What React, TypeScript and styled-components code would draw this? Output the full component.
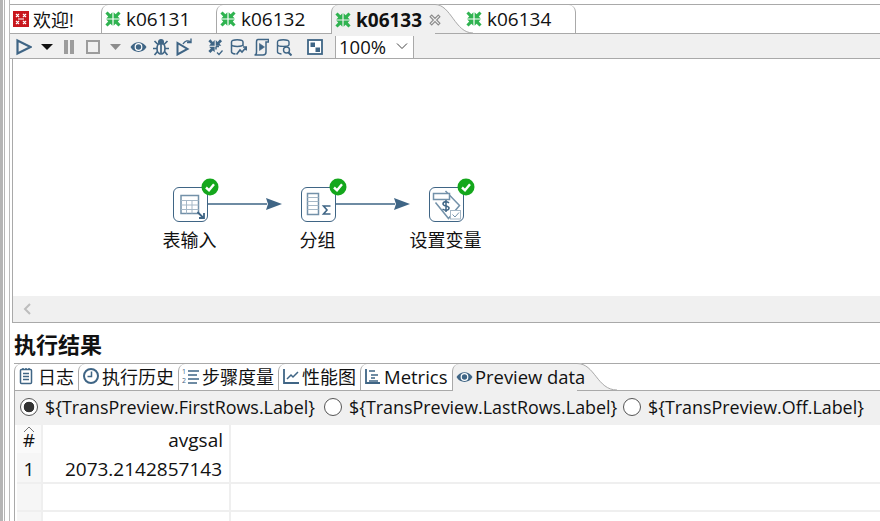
import * as React from "react";
import styled, { createGlobalStyle } from "styled-components";

const INK = "#3f6585";
const SOFT = "#7391a9";
const FAINT = "#a6b8c7";
const LINE = "#a9a9a9";
const PANEL = "#f0f0f0";
const CJK = `"Open Sans", "Noto Sans", "Noto Sans CJK SC", sans-serif`;

const Global = createGlobalStyle`
  html, body { margin: 0; padding: 0; background: #fff; }
  body { font-family: ${CJK}; color: #111; }
`;

const Page = styled.div`
  width: 880px;
  height: 521px;
  display: flex;
  overflow: hidden;
`;

const Gutter = styled.div`
  width: 10px;
  flex: none;
  background: linear-gradient(90deg, #b5b5b5 0 3px, #fff 3px 4px, #b5b5b5 4px 5px, #fff 5px 9px, #bbb 9px 10px);
`;

const Main = styled.div`
  flex: 1;
  min-width: 0;
  display: flex;
  flex-direction: column;
`;

const EditorTabs = styled.div`
  height: 30px;
  margin-top: 4px;
  display: flex;
  flex: none;
  border-top: 1px solid ${LINE};
  border-bottom: 1px solid ${LINE};
  box-sizing: border-box;
`;

const EditorTab = styled.div<{ $w: number; $active?: boolean }>`
  width: ${(p) => p.$w}px;
  flex: none;
  position: relative;
  box-sizing: border-box;
  display: flex;
  align-items: center;
  gap: 5px;
  padding-left: 3px;
  font-size: 19px;
  font-weight: ${(p) => (p.$active ? 700 : 400)};
  border-left: 1px solid ${LINE};
  border-top-left-radius: 7px;
  background: ${(p) => (p.$active ? PANEL : "#fff")};
  height: ${(p) => (p.$active ? "29px" : "28px")};
  z-index: ${(p) => (p.$active ? 2 : 1)};
`;

const WelcomeTab = styled(EditorTab)`
  border-left: none;
  font-size: 18px;
  gap: 4px;
`;

const LastTab = styled(EditorTab)`
  border-left: none;
  border-right: 1px solid ${LINE};
  border-top-right-radius: 7px;
  border-top-left-radius: 0;
  padding-left: 31px;
`;

const CloseMark = styled.svg`
  flex: none;
  position: relative;
  z-index: 1;
  margin-left: 2px;
`;

const TabTail = styled.svg`
  position: absolute;
  left: 100%;
  top: -1px;
`;

const Toolbar = styled.div`
  height: 25px;
  flex: none;
  display: flex;
  align-items: center;
  background: ${PANEL};
  border-bottom: 1px solid ${LINE};
  box-sizing: border-box;
  padding: 1px 0 0 6px;
`;

const ToolIcon = styled.svg<{ $gap?: number }>`
  flex: none;
  margin-right: ${(p) => p.$gap ?? 0}px;
`;

const Combo = styled.div`
  width: 79px;
  height: 22px;
  flex: none;
  align-self: flex-end;
  box-sizing: border-box;
  display: flex;
  align-items: center;
  justify-content: space-between;
  padding: 0 5px 2px 3px;
  background: #fff;
  border-left: 1px solid ${LINE};
  border-right: 1px solid ${LINE};
  font-size: 18.500px;
`;

const Editor = styled.div`
  margin-left: 2px;
  height: 264px;
  flex: none;
  display: flex;
  flex-direction: column;
  border-left: 1px solid ${LINE};
  border-bottom: 1px solid ${LINE};
  box-sizing: border-box;
`;

const Canvas = styled.div`
  flex: 1;
  position: relative;
`;

const Wires = styled.svg`
  position: absolute;
  inset: 0;
`;

const Step = styled.div<{ $x: number; $y: number }>`
  position: absolute;
  left: ${(p) => p.$x}px;
  top: ${(p) => p.$y}px;
  width: 35px;
  height: 35px;
  box-sizing: border-box;
  background: #fff;
  border: 1.500px solid ${INK};
  border-radius: 6px;
  display: flex;
  align-items: center;
  justify-content: center;

  > svg:first-child { flex: none; }
`;

const Badge = styled.svg`
  position: absolute;
  right: -12px;
  top: -10px;
`;

const StepLabel = styled.div`
  position: absolute;
  left: 50%;
  top: 40px;
  transform: translateX(calc(-50% - 1px));
  white-space: nowrap;
  font-size: 18px;
  line-height: 24px;
`;

const HScroll = styled.div`
  height: 26px;
  flex: none;
  background: ${PANEL};
  display: flex;
  align-items: center;
  padding-left: 9px;
`;

const Results = styled.div`
  flex: 1;
  min-height: 0;
  display: flex;
  flex-direction: column;
  padding-left: 4px;
  overflow: hidden;
`;

const ResultsTitle = styled.div`
  height: 40px;
  flex: none;
  box-sizing: border-box;
  padding-top: 7px;
  font-size: 22px;
  font-weight: 700;
  line-height: 28px;
`;

const ResultTabs = styled.div`
  height: 28px;
  flex: none;
  display: flex;
  box-sizing: border-box;
  border-top: 1px solid ${LINE};
  border-bottom: 1px solid ${LINE};
`;

const ResultTab = styled.div<{ $w: number; $active?: boolean; $size?: number }>`
  width: ${(p) => p.$w}px;
  flex: none;
  position: relative;
  box-sizing: border-box;
  display: flex;
  align-items: center;
  gap: 2px;
  padding: 0 0 2px 3px;
  font-size: ${(p) => p.$size ?? 18}px;
  white-space: nowrap;
  border-left: 1px solid ${LINE};
  border-top-left-radius: 7px;
  background: ${(p) => (p.$active ? PANEL : "#fff")};
  height: ${(p) => (p.$active ? "27px" : "26px")};
  z-index: ${(p) => (p.$active ? 2 : 1)};

  svg { flex: none; }
`;

const TailText = styled.span`
  position: relative;
  z-index: 1;
`;

const Body = styled.div`
  flex: 1;
  min-height: 0;
  display: flex;
  flex-direction: column;
  border-left: 1px solid ${LINE};
`;

const RadioRow = styled.div`
  height: 34px;
  flex: none;
  box-sizing: border-box;
  display: flex;
  align-items: center;
  background: ${PANEL};
  font-size: 17.900px;
  padding: 0 0 2px 5px;
`;

const Radio = styled.span<{ $on?: boolean; $w: number }>`
  width: ${(p) => p.$w}px;
  flex: none;
  display: flex;
  align-items: center;
  gap: 7px;
  white-space: nowrap;

  &::before {
    content: "";
    width: 18px;
    height: 18px;
    flex: none;
    box-sizing: border-box;
    border: 1px solid #555;
    border-radius: 50%;
    background: ${(p) =>
      p.$on ? "radial-gradient(circle, #333 0 5px, #fff 5.600px)" : "#fff"};
  }
`;

const Grid = styled.table`
  border-collapse: collapse;
  table-layout: fixed;
  width: 880px;
  margin-left: 2px;
  font-size: 19px;

  th, td {
    padding: 0;
    font-weight: 400;
    border-right: 2px solid #efefef;
    border-bottom: 2px solid #efefef;
    box-sizing: border-box;
  }
  th { height: 28px; padding-top: 2px; border-bottom: none; }
  td { height: 28px; padding-top: 3px; }
`;

const IndexCell = styled.td`
  width: 25px;
  text-align: center;
  background: #f6f6f6;
`;

const IndexHead = styled.th`
  width: 25px;
  text-align: center;
  position: relative;
  background: #fafafa;
`;

const SortMark = styled.svg`
  position: absolute;
  left: 6px;
  top: 1px;
`;

const ValueHead = styled.th`
  width: 188px;
  text-align: right;
  padding-right: 6px !important;
`;

const ValueCell = styled.td`
  width: 188px;
  text-align: right;
  padding-right: 7px !important;
`;

const ico = (w: number, gap: number, body: React.ReactNode) => (
  <ToolIcon $gap={gap} width={w} height={18} viewBox={`0 0 ${w} 18`} fill="none" stroke={INK} strokeWidth="1.500">
    {body}
  </ToolIcon>
);

// one inward pointing arrow, mirrored four times for the transformation glyph
const ARROW = "M7.400 7.400V1.200L5.400 3.200 2.600.4.400 2.600l2.800 2.800-2 2z";

const InwardArrows = ({ skipLast }: { skipLast?: boolean }) => (
  <>
    <path d={ARROW} />
    <path d={ARROW} transform="matrix(-1 0 0 1 16 0)" />
    <path d={ARROW} transform="matrix(1 0 0 -1 0 16)" />
    {!skipLast && <path d={ARROW} transform="matrix(-1 0 0 -1 16 16)" />}
  </>
);

const TransIcon = () => (
  <svg width="16" height="16" viewBox="0 0 16 16" fill="#2fb350" style={{ flex: "none" }}>
    <InwardArrows />
  </svg>
);

const WelcomeIcon = () => (
  <svg width="16" height="16" viewBox="0 0 16 16" style={{ flex: "none" }}>
    <rect width="16" height="16" fill="#c8161d" />
    <path d="M3 3l3 3M6 3L3 6M10 3l3 3M13 3l-3 3M3 10l3 3M6 10l-3 3M10 10l3 3M13 10l-3 3M5 8h6" stroke="#fff" strokeWidth="1.200" />
  </svg>
);

const Eye = ({ gap = 0 }: { gap?: number }) => (
  <ToolIcon $gap={gap} width="17" height="18" viewBox="0 0 17 18">
    <path d="M.5 9C4 2.500 13 2.500 16.500 9 13 15.500 4 15.500 .5 9z" fill={INK} />
    <circle cx="8.500" cy="9" r="3.900" fill="#fff" />
    <circle cx="8.500" cy="9" r="2.700" fill={INK} />
  </ToolIcon>
);

const Check = () => (
  <Badge width="18" height="18" viewBox="0 0 18 18">
    <circle cx="9" cy="9" r="8.500" fill="#14a71c" />
    <path d="M5 9.500l3 2.800 5-6" fill="none" stroke="#fff" strokeWidth="2.400" />
  </Badge>
);

const tabs = ["k06131", "k06132"];

export default function App() {
  return (
    <Page>
      <Global />
      <Gutter />
      <Main>
        <EditorTabs>
          <WelcomeTab $w={91}>
            <WelcomeIcon />
            <span>欢迎!</span>
          </WelcomeTab>
          {tabs.map((t) => (
            <EditorTab $w={115} key={t}>
              <TransIcon />
              <span>{t}</span>
            </EditorTab>
          ))}
          <EditorTab $w={104} $active>
            <TransIcon />
            <span>k06133</span>
            <CloseMark width="12" height="12" viewBox="0 0 11 11" fill="none" stroke="#8a8a8a">
              <path d="M1 2.500L2.500 1l3 3 3-3L10 2.500l-3 3 3 3L8.500 10l-3-3-3 3L1 8.500l3-3z" />
            </CloseMark>
            <TabTail width="40" height="30" viewBox="0 0 40 30">
              <path d="M0 0C16 0 20 29 38 29H0z" fill={PANEL} />
              <path d="M0 .5C16 .5 20 29 38 29" fill="none" stroke={LINE} />
            </TabTail>
          </EditorTab>
          <LastTab $w={141}>
            <TransIcon />
            <span>k06134</span>
          </LastTab>
        </EditorTabs>
        <Toolbar>
          {ico(16, 9, <path d="M1.500 2.500v13L14.500 9z" strokeWidth="2.200" />)}
          <ToolIcon $gap={11} width="12" height="18" viewBox="0 0 12 18"><path d="M0 6h12l-6 6z" fill="#111" /></ToolIcon>
          <ToolIcon $gap={12} width="10" height="18" viewBox="0 0 10 18"><path d="M0 2h4v14H0zM6 2h4v14H6z" fill="#9c9c9c" /></ToolIcon>
          <ToolIcon $gap={10} width="14" height="18" viewBox="0 0 14 18"><rect x="1" y="3" width="12" height="12" fill="none" stroke="#9c9c9c" strokeWidth="2" /></ToolIcon>
          <ToolIcon $gap={9} width="11" height="18" viewBox="0 0 11 18"><path d="M0 6h11l-5.500 6z" fill="#8c8c8c" /></ToolIcon>
          <Eye gap={6} />
          {ico(16, 7, <g strokeWidth="1.700"><ellipse cx="8" cy="10.500" rx="4" ry="5.500" /><circle cx="8" cy="4" r="2.200" fill={INK} /><path d="M1.500 3l3.500 3.500M14.500 3L11 6.500M0 10.500h4M16 10.500h-4M1.500 17l3-3.500M14.500 17l-3-3.500M8 7v8" /></g>)}
          {ico(16, 16, <g><path d="M1.500 5v11.500L11.500 11z" strokeWidth="2" /><path d="M7 6c2-3.500 5-4 8-2M15 .5V4.500h-4" strokeWidth="1.400" /></g>)}
          {ico(15, 7, <g><g transform="translate(0 1) scale(.9)" fill={INK} stroke="none"><InwardArrows skipLast /></g><path d="M8 8.500h3M8 8.500v3" stroke={INK} strokeWidth="1.500" /><path d="M9 14.500l2 2 3.500-4" stroke={INK} strokeWidth="1.300" /></g>)}
          {ico(17, 6, <g strokeWidth="1.500"><path d="M1.500 14V4C1.500 1 13 1 13 4v4M1.500 6.500c0 2.500 11.500 2.500 11.500 0M1.500 14c0 1.300 2 1.800 4 2" /><path d="M6.500 16.500L10 12l2 2 4-4.500M13 9h3.500v3.500" strokeWidth="1.600" /></g>)}
          {ico(16, 7, <g strokeWidth="1.500"><path d="M5 1.500h10.500V4H13v10c0 2-1 3-3 3H1.500C3 17 3.500 16 3.500 14V4c0-2 .5-2.500 1.500-2.500z" /><path d="M6.500 5.500v7l5-3.500z" fill={INK} strokeWidth=".6" /></g>)}
          {ico(16, 15, <g strokeWidth="1.400"><path d="M1.500 14V4C1.500 1 13 1 13 4v3M1.500 6.500c0 2.500 11.500 2.500 11.500 0M1.500 14c0 1.300 2 1.800 4 2" /><circle cx="10.500" cy="12" r="3" /><path d="M12.500 14.500l3 3" strokeWidth="2" /></g>)}
          <ToolIcon $gap={12} width="16" height="18" viewBox="0 0 16 18">
            <rect x="1" y="2" width="14" height="14" fill="#fff" stroke={INK} strokeWidth="1.800" />
            <path d="M3.500 4.500h4.500v4.500H3.500zM8.500 9.500h4.500v4.500H8.500z" fill={INK} />
          </ToolIcon>
          <Combo>
            <span>100%</span>
            <svg width="12" height="8" viewBox="0 0 12 8" fill="none" stroke="#444"><path d="M1 1.500l5 5 5-5" /></svg>
          </Combo>
        </Toolbar>
        <Editor>
          <Canvas>
            <Wires width="867" height="237" viewBox="13 59 867 237">
              <path d="M207 204h60M335 204h60" stroke={INK} strokeWidth="1.300" />
              <path d="M266 198l16 6-16 6 2-6zM394 198l16 6-16 6 2-6z" fill={INK} />
            </Wires>
            <Step $x={160} $y={128}>
              <svg width="32" height="32" viewBox="0 0 32 32" fill="none">
                <path d="M6 6.500h17.500v18H6z" stroke={SOFT} strokeWidth="1.500" />
                <path d="M6 11.500h17.500M6 16h17.500M6 20.500h17.500M11.500 11.500v13M17 11.500v13" stroke={FAINT} />
                <path d="M22.500 23l6 6M29 24v5h-5" stroke={INK} strokeWidth="1.800" />
              </svg>
              <Check />
              <StepLabel>表输入</StepLabel>
            </Step>
            <Step $x={288} $y={128}>
              <svg width="32" height="32" viewBox="0 0 32 32" fill="none">
                <path d="M4.500 4.500h11v21h-11z" stroke={SOFT} strokeWidth="1.500" />
                <path d="M4.500 8.500h11M4.500 12.500h11M4.500 16.500h11M4.500 20.500h11" stroke={FAINT} />
                <path d="M27.500 17h-7l3.500 4-3.500 4h7" stroke={INK} strokeWidth="1.600" />
              </svg>
              <Check />
              <StepLabel>分组</StepLabel>
            </Step>
            <Step $x={416} $y={128}>
              <svg width="32" height="32" viewBox="0 0 32 32" fill="none">
                <path d="M14.500 2L28.500 16.500 17.500 29.500 4.500 13.500" stroke={SOFT} strokeWidth="1.500" />
                <path d="M2.500 4.500h16v6h-16z" fill="#fff" stroke={SOFT} strokeWidth="1.500" />
                <path d="M18 14c-2-2-6-1.500-6 1s6 1.500 6 4-4 3-6.500 1M15 11v12" stroke={INK} strokeWidth="1.500" />
                <rect x="19.500" y="21.500" width="10" height="8.500" fill="#fff" stroke={FAINT} />
                <path d="M21.500 25.500l2.500 2.500 4-4.500" stroke={SOFT} />
              </svg>
              <Check />
              <StepLabel>设置变量</StepLabel>
            </Step>
          </Canvas>
          <HScroll>
            <svg width="10" height="12" viewBox="0 0 10 12" fill="none" stroke="#bdbdbd" strokeWidth="2"><path d="M8 1L3 6l5 5" /></svg>
          </HScroll>
        </Editor>
        <Results>
          <ResultsTitle>执行结果</ResultsTitle>
          <ResultTabs>
            <ResultTab $w={64}>
              <svg width="18" height="18" viewBox="0 0 18 18" fill="none" stroke={INK} strokeWidth="1.500"><rect x="2.500" y="2.500" width="11" height="14" rx="1" /><path d="M5 6.500h6M5 9.500h6M5 12.500h6M5 1v2M8 1v2M11 1v2" /></svg>
              <span>日志</span>
            </ResultTab>
            <ResultTab $w={100}>
              <svg width="18" height="18" viewBox="0 0 18 18" fill="none" stroke={INK} strokeWidth="2"><circle cx="9" cy="9" r="7" /><path d="M9.500 4.500V9.500H5.500" strokeWidth="1.500" /></svg>
              <span>执行历史</span>
            </ResultTab>
            <ResultTab $w={100}>
              <svg width="18" height="18" viewBox="0 0 18 18" fill="none" stroke={INK} strokeWidth="1.500"><path d="M6 4h11M6 8h9M6 12h11M6 16h9" /><text x="0" y="7" fontSize="7" fill={INK} stroke="none">1</text><text x="0" y="16" fontSize="7" fill={INK} stroke="none">2</text></svg>
              <span>步骤度量</span>
            </ResultTab>
            <ResultTab $w={82}>
              <svg width="18" height="18" viewBox="0 0 18 18" fill="none" stroke={INK} strokeWidth="1.800"><path d="M2 2v14h15" /><path d="M5 12l4-4 2 2 5-5" strokeWidth="1.500" /></svg>
              <span>性能图</span>
            </ResultTab>
            <ResultTab $w={92} $size={18.5}>
              <svg width="18" height="18" viewBox="0 0 18 18" fill="none" stroke={INK} strokeWidth="1.800"><path d="M2 2v14h14" /><path d="M5 4h6M7 8h7M7 11h4M5 14h9" strokeWidth="1.500" /></svg>
              <span>Metrics</span>
            </ResultTab>
            <ResultTab $w={125} $active $size={18.4}>
              <Eye />
              <TailText>Preview data</TailText>
              <TabTail width="42" height="28" viewBox="0 0 42 28">
                <path d="M0 0C18 0 20 27 40 27H0z" fill={PANEL} />
                <path d="M0 .5C18 .5 20 27 40 27" fill="none" stroke={LINE} />
              </TabTail>
            </ResultTab>
          </ResultTabs>
          <Body>
            <RadioRow>
              <Radio $on $w={304}>{"${TransPreview.FirstRows.Label}"}</Radio>
              <Radio $w={299}>{"${TransPreview.LastRows.Label}"}</Radio>
              <Radio $w={250}>{"${TransPreview.Off.Label}"}</Radio>
            </RadioRow>
            <Grid>
              <thead>
                <tr>
                  <IndexHead>
                    <SortMark width="12" height="7" viewBox="0 0 12 7" fill="none" stroke="#777"><path d="M1 6l5-5 5 5" /></SortMark>
                    #
                  </IndexHead>
                  <ValueHead>avgsal</ValueHead>
                  <th />
                </tr>
              </thead>
              <tbody>
                <tr>
                  <IndexCell>1</IndexCell>
                  <ValueCell>2073.2142857143</ValueCell>
                  <td />
                </tr>
                <tr>
                  <IndexCell />
                  <ValueCell />
                  <td />
                </tr>
                <tr>
                  <IndexCell />
                  <ValueCell />
                  <td />
                </tr>
              </tbody>
            </Grid>
          </Body>
        </Results>
      </Main>
    </Page>
  );
}
